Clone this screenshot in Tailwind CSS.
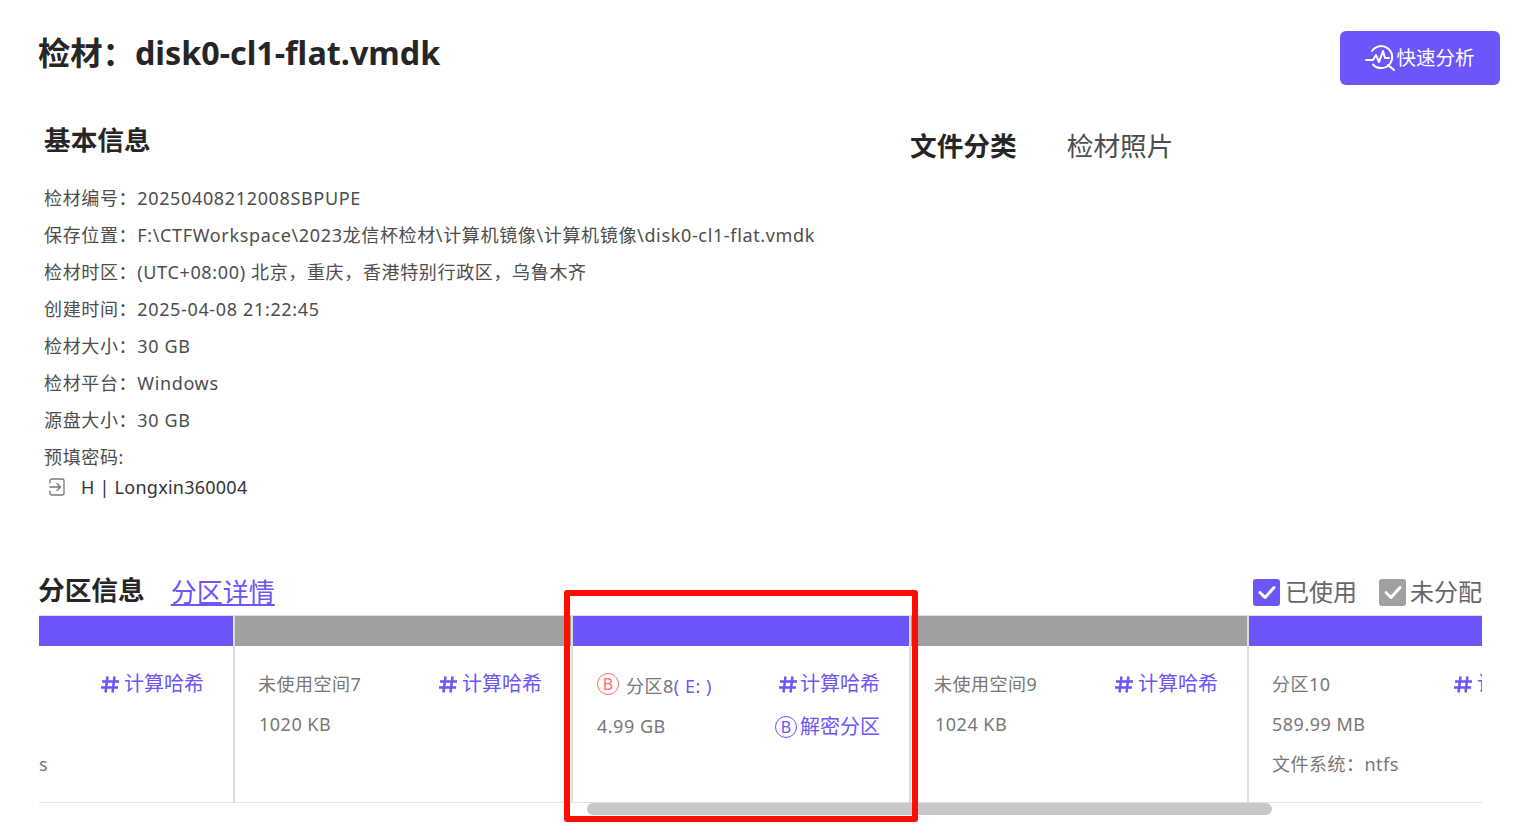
<!DOCTYPE html>
<html lang="zh-CN">
<head>
    <meta charset="UTF-8">
    <title>检材详情</title>
    <script src="https://cdn.jsdelivr.net/npm/@tailwindcss/browser@4"></script>
</head>
<body class="bg-white text-[#333] font-['Noto_Sans','Noto_Sans_CJK_SC',sans-serif]">
    <div class="relative h-[834px] w-[1527px] overflow-hidden">
        <!-- Header -->
        <div class="flex justify-between pl-[38px] pr-[27px] pt-[31px]">
            <h1 class="h-[42px] text-[32.3px] leading-[42px] font-bold text-[#262626]">检材：disk0-cl1-flat.vmdk</h1>
            <button class="flex h-[54px] w-[160px] items-center justify-center rounded-[6px] bg-[#6c55fa] text-[19.5px] text-white">
                <svg class="mr-[1px] h-[28px] w-[30px]" viewBox="0 0 30 28" fill="none" stroke="currentColor" stroke-width="2" stroke-linecap="round" stroke-linejoin="round">
                    <path d="M7 7A11 11 0 1 1 8 20.500"/>
                    <path d="M1 16h7l3-5 3 7 4-11 2 7h4"/>
                    <path d="M23 21l6 5"/>
                </svg>
                <span>快速分析</span>
            </button>
        </div>

        <!-- Info -->
        <div class="mt-[37px] flex pl-[44px]">
            <div class="w-[866px]">
                <h2 class="text-[26.7px] leading-[36px] font-bold text-[#262626]">基本信息</h2>
                <div class="mt-[22px] text-[18px] leading-[37px] tracking-[0.65px] text-[#4d4d4d]">
                    <p>检材编号：20250408212008SBPUPE</p>
                    <p>保存位置：F:\CTFWorkspace\2023龙信杯检材\计算机镜像\计算机镜像\disk0-cl1-flat.vmdk</p>
                    <p>检材时区：(UTC+08:00) 北京，重庆，香港特别行政区，乌鲁木齐</p>
                    <p>创建时间：2025-04-08 21:22:45</p>
                    <p>检材大小：30 GB</p>
                    <p>检材平台：Windows</p>
                    <p>源盘大小：30 GB</p>
                    <p>预填密码:</p>
                </div>
                <div class="-mt-[1px] flex h-[24px] items-center text-[18px] tracking-[0.25px] text-[#333]">
                    <svg class="ml-[3px] h-[20px] w-[20px]" viewBox="0 0 20 20" fill="none" stroke="#777" stroke-width="1.3" stroke-linecap="round" stroke-linejoin="round">
                        <path d="M3 6V4a2 2 0 0 1 2-2h10a2 2 0 0 1 2 2v12a2 2 0 0 1-2 2H5a2 2 0 0 1-2-2v-2"/>
                        <path d="M3 10h10M10 6.500l3.500 3.500-3.500 3.500"/>
                    </svg>
                    <span class="ml-[14px]">H | Longxin360004</span>
                </div>
            </div>
            <div class="flex items-start pt-[6px]">
                <span class="text-[26.7px] leading-[36px] font-bold text-[#262626]">文件分类</span>
                <span class="ml-[50px] text-[26.7px] leading-[36px] text-[#4d4d4d]">检材照片</span>
            </div>
        </div>

        <!-- Partitions -->
        <div class="mt-[73px] pl-[39px] pr-[45px]">
            <div class="flex h-[42px] items-center justify-between">
                <div class="flex items-center">
                    <h2 class="-ml-[1px] mb-[6px] text-[26.7px] font-bold text-[#262626]">分区信息</h2>
                    <a class="mb-[2px] ml-[26px] text-[26px] text-[#6c55fa] underline">分区详情</a>
                </div>
                <div class="mb-[2px] flex items-center text-[24px] text-[#666]">
                    <span class="flex h-[27px] w-[27px] items-center justify-center rounded-[3px] bg-[#6c55fa]">
                        <svg class="h-[20px] w-[20px]" viewBox="0 0 20 20" fill="none" stroke="white" stroke-width="3" stroke-linecap="round" stroke-linejoin="round"><path d="M3 10.500l5 5 9-10"/></svg>
                    </span>
                    <span class="ml-[5px]">已使用</span>
                    <span class="ml-[22px] flex h-[27px] w-[27px] items-center justify-center rounded-[3px] bg-[#a0a0a0]">
                        <svg class="h-[20px] w-[20px]" viewBox="0 0 20 20" fill="none" stroke="white" stroke-width="3" stroke-linecap="round" stroke-linejoin="round"><path d="M3 10.500l5 5 9-10"/></svg>
                    </span>
                    <span class="ml-[4px]">未分配</span>
                </div>
            </div>

            <div class="mt-[1px] flex h-[188px] overflow-hidden border-y border-[#e0e0e0] text-[18px] tracking-[0.5px] text-[#777]">
                <!-- Partition scrolled partly out of view, only its tail shows -->
                <div class="w-[196px] shrink-0 border-r-2 border-[#ddd]">
                    <div class="h-[30px] bg-[#6c55fa]"></div>
                    <div class="flex justify-between pr-[29px] pt-[23px]">
                        <p class="mt-[80px] leading-[30px]">s</p>
                        <p class="flex h-[30px] items-center text-[20px] tracking-normal text-[#6c55fa]">
                            <svg class="mr-[5px] h-[17px] w-[18px]" viewBox="0 0 18 17" fill="none" stroke="currentColor" stroke-width="2.5"><path d="M6.500 0.500L4.500 16.500M13.500 0.500L11.500 16.500M1 5.500h17M0 11.500h17"/></svg>计算哈希
                        </p>
                    </div>
                </div>

                <div class="w-[338px] shrink-0 border-r-2 border-[#ddd]">
                    <div class="h-[30px] bg-[#a0a0a0]"></div>
                    <div class="flex justify-between pl-[24px] pr-[29px] pt-[23px]">
                        <div>
                            <p class="-ml-[1px] leading-[30px]">未使用空间7</p>
                            <p class="mt-[10px] leading-[30px]">1020 KB</p>
                        </div>
                        <p class="flex h-[30px] items-center text-[20px] tracking-normal text-[#6c55fa]">
                            <svg class="mr-[5px] h-[17px] w-[18px]" viewBox="0 0 18 17" fill="none" stroke="currentColor" stroke-width="2.5"><path d="M6.500 0.500L4.500 16.500M13.500 0.500L11.500 16.500M1 5.500h17M0 11.500h17"/></svg>计算哈希
                        </p>
                    </div>
                </div>

                <div class="w-[338px] shrink-0 border-r-2 border-[#ddd]">
                    <div class="h-[30px] bg-[#6c55fa]"></div>
                    <div class="flex justify-between pl-[24px] pr-[29px] pt-[23px]">
                        <div>
                            <div class="flex h-[30px] items-center">
                                <span class="flex h-[22px] w-[22px] items-center justify-center rounded-full border-[1.5px] border-[#ff6b6b] text-[16px] tracking-normal text-[#ff6b6b]">B</span>
                                <span class="ml-[7px] mt-[4px]">分区8<span class="text-[#6c55fa]">( E: )</span></span>
                            </div>
                            <p class="mt-[12px] leading-[30px]">4.99 GB</p>
                        </div>
                        <div class="text-[20px] tracking-normal text-[#6c55fa]">
                            <p class="flex h-[30px] items-center justify-end">
                                <svg class="mr-[3px] h-[17px] w-[18px]" viewBox="0 0 18 17" fill="none" stroke="currentColor" stroke-width="2.5"><path d="M6.500 0.500L4.500 16.500M13.500 0.500L11.500 16.500M1 5.500h17M0 11.500h17"/></svg>计算哈希
                            </p>
                            <div class="mt-[13px] flex h-[30px] items-center justify-end">
                                <span class="mr-[3px] flex h-[22px] w-[22px] items-center justify-center rounded-full border-[1.5px] border-[#6c55fa] text-[16px]">B</span>解密分区
                            </div>
                        </div>
                    </div>
                </div>

                <div class="w-[338px] shrink-0 border-r-2 border-[#ddd]">
                    <div class="h-[30px] bg-[#a0a0a0]"></div>
                    <div class="flex justify-between pl-[24px] pr-[29px] pt-[23px]">
                        <div>
                            <p class="-ml-[1px] leading-[30px]">未使用空间9</p>
                            <p class="mt-[10px] leading-[30px]">1024 KB</p>
                        </div>
                        <p class="flex h-[30px] items-center text-[20px] tracking-normal text-[#6c55fa]">
                            <svg class="mr-[5px] h-[17px] w-[18px]" viewBox="0 0 18 17" fill="none" stroke="currentColor" stroke-width="2.5"><path d="M6.500 0.500L4.500 16.500M13.500 0.500L11.500 16.500M1 5.500h17M0 11.500h17"/></svg>计算哈希
                        </p>
                    </div>
                </div>

                <div class="w-[234px] shrink-0">
                    <div class="h-[30px] bg-[#6c55fa]"></div>
                    <div class="flex pl-[23px] pt-[23px]">
                        <div class="w-[182px] shrink-0">
                            <p class="leading-[30px]">分区10</p>
                            <p class="mt-[10px] leading-[30px]">589.99 MB</p>
                            <p class="mt-[10px] leading-[30px]">文件系统：ntfs</p>
                        </div>
                        <p class="flex h-[30px] shrink-0 items-center text-[20px] tracking-normal whitespace-nowrap text-[#6c55fa]">
                            <svg class="mr-[5px] h-[17px] w-[18px]" viewBox="0 0 18 17" fill="none" stroke="currentColor" stroke-width="2.5"><path d="M6.500 0.500L4.500 16.500M13.500 0.500L11.500 16.500M1 5.500h17M0 11.500h17"/></svg>计算哈希
                        </p>
                    </div>
                </div>
            </div>
            <div class="ml-[548px] h-[12px] w-[685px] rounded-full bg-[#c8c8c8]"></div>
        </div>

        <!-- Red annotation over the screenshot -->
        <div class="absolute left-[564px] top-[590px] h-[232px] w-[354px] rounded-[3px] border-[6px] border-[#ff0e00]"></div>
    </div>
</body>
</html>
